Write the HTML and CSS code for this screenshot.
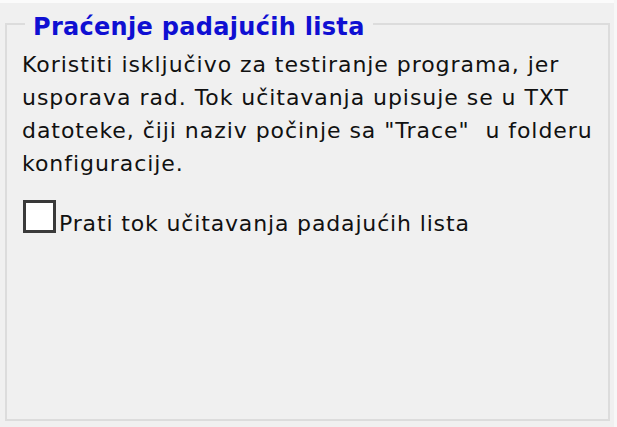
FILE: index.html
```html
<!DOCTYPE html>
<html lang="sr">
<head>
<meta charset="utf-8">
<title>Praćenje padajućih lista</title>
<link rel="stylesheet" href="styles.css">
</head>
<body>
<div class="screen">
  <div class="topbar"></div>
  <fieldset class="group">
    <legend class="group-title">Praćenje padajućih lista</legend>
    <p class="note">Koristiti isključivo za testiranje programa, jer<br>usporava rad. Tok učitavanja upisuje se u TXT<br>datoteke, čiji naziv počinje sa "Trace"&nbsp; u folderu<br>konfiguracije.</p>
    <label class="check"><span class="box"></span><span class="check-text">Prati tok učitavanja padajućih lista</span></label>
  </fieldset>
</div>
</body>
</html>
```
FILE: styles.css
```css
html, body {
  margin: 0;
  padding: 0;
}
body {
  background: #f0f0f0;
  font-family: "DejaVu Sans", "Liberation Sans", sans-serif;
  color: #111;
}
.screen {
  width: 617px;
  height: 427px;
  box-sizing: border-box;
  border-right: 3px solid #f7f7f7;
  display: flex;
  flex-direction: column;
}
.topbar {
  height: 3px;
  background: #fbfbfb;
  flex: none;
}
.group {
  flex: 1;
  margin: 8px 4px 6px 5px;
  padding: 0;
  border: 2px solid #dcdcdc;
  min-width: 0;
}
.group-title {
  margin-left: 18px;
  padding: 6px 8px 0 8px;
  font-size: 24px;
  line-height: 20px;
  font-weight: bold;
  letter-spacing: 0.3px;
  color: #0f0fd2;
}
.note {
  margin: 11px 0 0 15px;
  font-size: 22px;
  line-height: 33px;
  letter-spacing: 0.95px;
  white-space: nowrap;
}
.check {
  display: flex;
  align-items: flex-start;
  margin: 20px 0 0 16px;
  font-size: 22px;
  line-height: 33px;
  letter-spacing: 0.85px;
}
.box {
  width: 33px;
  height: 33px;
  box-sizing: border-box;
  border: 3px solid #3a3a3a;
  background: #fff;
  flex: none;
}
.check-text {
  margin: 7px 0 0 3px;
  white-space: nowrap;
}
```
